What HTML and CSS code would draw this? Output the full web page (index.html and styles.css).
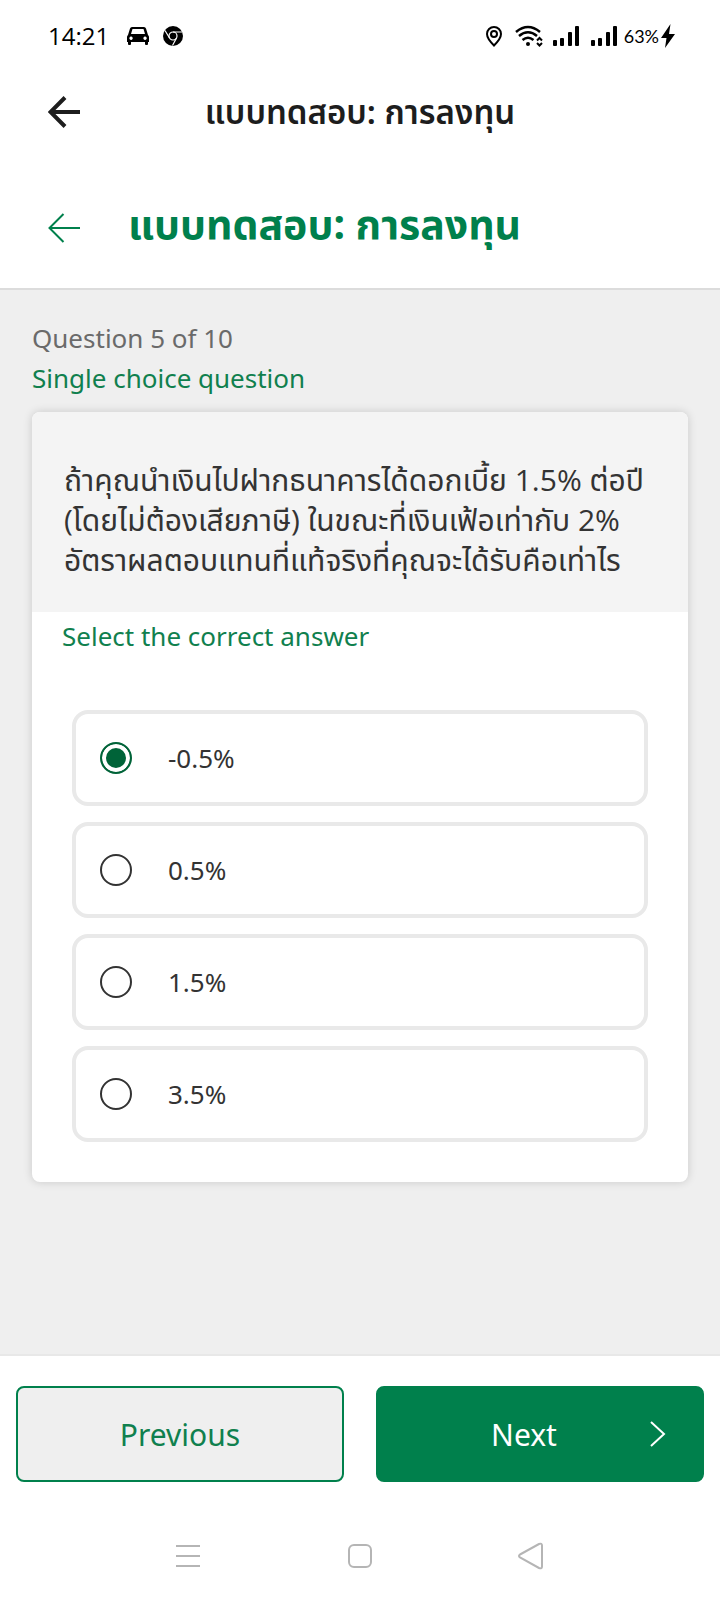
FILE: index.html
```
<!DOCTYPE html>
<html lang="th">
<head>
  <meta charset="UTF-8" />
  <meta name="viewport" content="width=device-width, initial-scale=1.0" />
  <title>แบบทดสอบ: การลงทุน</title>
  <link rel="stylesheet" href="styles.css">
</head>
<body>
  <div class="status-bar">
    <span class="clock">14:21</span>
    <svg class="car" width="22" height="20" viewBox="0 0 22 20">
      <path fill-rule="evenodd" d="M5 1h12q1.500 0 2 1.500l2 6.500q1 1 1 2v5h-1v2q0 1-1 1h-1q-1 0-1-1v-2H4v2q0 1-1 1H2q-1 0-1-1v-2H0v-5q0-1 1-2l2-6.500Q3.500 1 5 1zM5.500 3L4 8h14l-1.500-5zM4 10.500a1.700 1.700 0 1 0 .1 0zM18 10.500a1.700 1.700 0 1 0 .1 0z"/>
    </svg>
    <svg class="chrome" width="20" height="20" viewBox="0 0 20 20">
      <circle cx="10" cy="10" r="10"/>
      <g fill="none" stroke="#fff" stroke-width="1.200">
        <circle cx="10" cy="10" r="4"/>
        <path d="M10 6h9M6.500 12L2 4.500M13.500 12L9.500 19.500"/>
      </g>
    </svg>
    <div class="status-right">
      <svg width="18" height="22" viewBox="0 0 18 22" fill="none" stroke="#000" stroke-width="2">
        <path d="M9 20.500C5 16.500 2 13 2 9a7 7 0 0 1 14 0c0 4-3 7.500-7 11.500z"/>
        <circle cx="9" cy="9" r="3"/>
      </svg>
      <svg class="wifi" width="28" height="22" viewBox="0 0 28 22" fill="none" stroke="#000" stroke-width="2.500">
        <path d="M1 7q12-10 24 0M4 11q9-7.500 18 0M7.500 15q5.500-4.500 11 0"/>
        <circle cx="13" cy="19" r="2" fill="#000" stroke="none"/>
        <path stroke-width="2" d="M22 15.500l2.500-2.500 2.500 2.500M22 18l2.500 2.500L27 18"/>
      </svg>
      <svg class="signal" width="26" height="20" viewBox="0 0 26 20">
        <rect y="14" width="4" height="6" rx="1"/><rect x="7" y="12" width="4" height="8" rx="1"/><rect x="15" y="6" width="4" height="14" rx="1"/><rect x="22" width="4" height="20" rx="1"/>
      </svg>
      <svg class="signal" width="26" height="20" viewBox="0 0 26 20">
        <rect y="14" width="4" height="6" rx="1"/><rect x="7" y="12" width="4" height="8" rx="1"/><rect x="15" y="6" width="4" height="14" rx="1"/><rect x="22" width="4" height="20" rx="1"/>
      </svg>
      <span class="battery">63%</span>
      <svg width="14" height="24" viewBox="0 0 14 24"><path d="M9.500 0L0 14h5.500L4 24l10-14H8z"/></svg>
    </div>
  </div>

  <header class="app-bar">
    <button class="icon-button" aria-label="Back">
      <svg width="32" height="32" viewBox="0 0 32 32" fill="none" stroke="#1d1d1d" stroke-width="4">
        <path d="M32 16H3M17 1.500L2.500 16 17 30.500"/>
      </svg>
    </button>
    <h1 class="app-title">แบบทดสอบ: การลงทุน</h1>
  </header>

  <header class="quiz-header">
    <a class="quiz-back" href="#" aria-label="Back">
      <svg width="32" height="30" viewBox="0 0 32 30" fill="none" stroke="#00804c" stroke-width="2">
        <path d="M32 15H2M15.500 1L1.500 15l14 14"/>
      </svg>
    </a>
    <h2 class="quiz-title">แบบทดสอบ: การลงทุน</h2>
  </header>

  <main class="quiz">
    <p class="progress">Question 5 of 10</p>
    <p class="hint">Single choice question</p>
    <form class="card">
      <p class="question">ถ้าคุณนำเงินไปฝากธนาคารได้ดอกเบี้ย 1.5% ต่อปี<br>(โดยไม่ต้องเสียภาษี) ในขณะที่เงินเฟ้อเท่ากับ 2%<br>อัตราผลตอบแทนที่แท้จริงที่คุณจะได้รับคือเท่าไร</p>
      <p class="instruction">Select the correct answer</p>
      <div class="options">
        <label class="option"><input type="radio" name="answer" checked> -0.5%</label>
        <label class="option"><input type="radio" name="answer"> 0.5%</label>
        <label class="option"><input type="radio" name="answer"> 1.5%</label>
        <label class="option"><input type="radio" name="answer"> 3.5%</label>
      </div>
    </form>
  </main>

  <footer class="actions">
    <button class="btn btn-previous">Previous</button>
    <button class="btn btn-next">
      <span class="btn-text">Next</span>
      <svg width="16" height="28" viewBox="0 0 16 28" fill="none" stroke="#fff" stroke-width="2">
        <path d="M1 2l13 12L1 26"/>
      </svg>
    </button>
  </footer>

  <nav class="nav-bar">
    <button class="icon-button" aria-label="Recent apps">
      <svg width="28" height="28" viewBox="0 0 28 28"><path d="M2 4h24M2 14h24M2 24h24"/></svg>
    </button>
    <button class="icon-button" aria-label="Home">
      <svg width="28" height="28" viewBox="0 0 28 28"><rect x="3" y="3" width="22" height="22" rx="5"/></svg>
    </button>
    <button class="icon-button" aria-label="Back">
      <svg width="28" height="28" viewBox="0 0 28 28"><path d="M2 12.500L21 2q3-1.200 3 1.500v21q0 2.700-3 1.500L2 15.500q-2-1.500 0-3z"/></svg>
    </button>
  </nav>
</body>
</html>
```
FILE: styles.css
```
* { box-sizing: border-box; }
body {
  margin: 0;
  min-height: 100vh;
  display: flex;
  flex-direction: column;
  font-family: "Noto Sans", "Noto Sans Thai", sans-serif;
  font-size: 26px;
  line-height: 40px;
  color: #333;
  background: #fff;
}
h1, h2, p { margin: 0; }
button {
  font-family: inherit;
  cursor: pointer;
}
svg {
  display: block;
  flex: none;
}
.icon-button {
  display: block;
  padding: 0;
  border: none;
  background: none;
}

/* status bar */
.status-bar {
  display: flex;
  align-items: center;
  height: 72px;
  padding: 0 45px 0 48px;
  color: #000;
}
.clock {
  font-family: "Open Sans", sans-serif;
  font-size: 24px;
}
.car { margin-left: 18px; }
.chrome { margin-left: 14px; }
.status-right {
  display: flex;
  align-items: center;
  margin-left: auto;
}
.wifi { margin-left: 12px; }
.signal { margin-left: 10px; }
.signal + .signal { margin-left: 12px; }
.battery {
  margin: 0 2px 0 7px;
  font-family: Lato, sans-serif;
  font-size: 18px;
}

/* headers */
.app-bar {
  display: grid;
  grid-template-columns: 32px 1fr 32px;
  align-items: center;
  height: 80px;
  padding: 0 48px;
}
.app-title {
  font-size: 33px;
  font-weight: 600;
  text-align: center;
  color: #1d1d1d;
}
.quiz-header {
  display: flex;
  align-items: center;
  gap: 48px;
  height: 138px;
  padding: 16px 48px 0;
  border-bottom: 2px solid #dcdcdc;
}
.quiz-title {
  padding-bottom: 10px;
  font-size: 41px;
  font-weight: 700;
  color: #00804c;
}

/* question */
.quiz {
  flex: 1;
  padding: 28px 32px;
  background: #efefef;
  border-bottom: 2px solid #e8e8e8;
}
.progress { color: #6a6a6a; }
.hint, .instruction { color: #10804e; }
.card {
  margin-top: 14px;
  background: #fff;
  border-radius: 8px;
  box-shadow: 0 0 10px rgba(0, 0, 0, 0.16);
  overflow: hidden;
}
.question {
  padding: 48px 32px 32px;
  font-family: "Open Sans", "Noto Sans", "Noto Sans Thai", sans-serif;
  font-size: 30px;
  background: #f4f4f4;
}
.instruction {
  padding: 4px 30px;
}
.options {
  display: flex;
  flex-direction: column;
  gap: 16px;
  padding: 50px 40px 40px;
}
.option {
  display: flex;
  align-items: center;
  gap: 36px;
  height: 96px;
  padding: 0 24px;
  border: 4px solid #e9e9e9;
  border-radius: 16px;
}
.option input {
  appearance: none;
  width: 32px;
  height: 32px;
  margin: 0;
  border: 2px solid #333;
  border-radius: 50%;
}
.option input:checked {
  border-color: #006338;
  background: #006338;
  box-shadow: inset 0 0 0 4px #fff;
}

/* buttons */
.actions {
  display: grid;
  grid-template-columns: 1fr 1fr;
  gap: 32px;
  padding: 30px 16px;
}
.btn {
  height: 96px;
  border: 2px solid #00804c;
  border-radius: 8px;
  font-size: 30px;
}
.btn-previous {
  color: #10804e;
  background: #efefef;
}
.btn-next {
  display: flex;
  align-items: center;
  padding: 0 36px 0 20px;
  color: #fff;
  background: #00804c;
}
.btn-text {
  flex: 1;
}

.nav-bar {
  display: flex;
  justify-content: center;
  gap: 144px;
  padding: 30px 0;
}
.nav-bar svg {
  fill: none;
  stroke: #b5b5b5;
  stroke-width: 2;
}
```
